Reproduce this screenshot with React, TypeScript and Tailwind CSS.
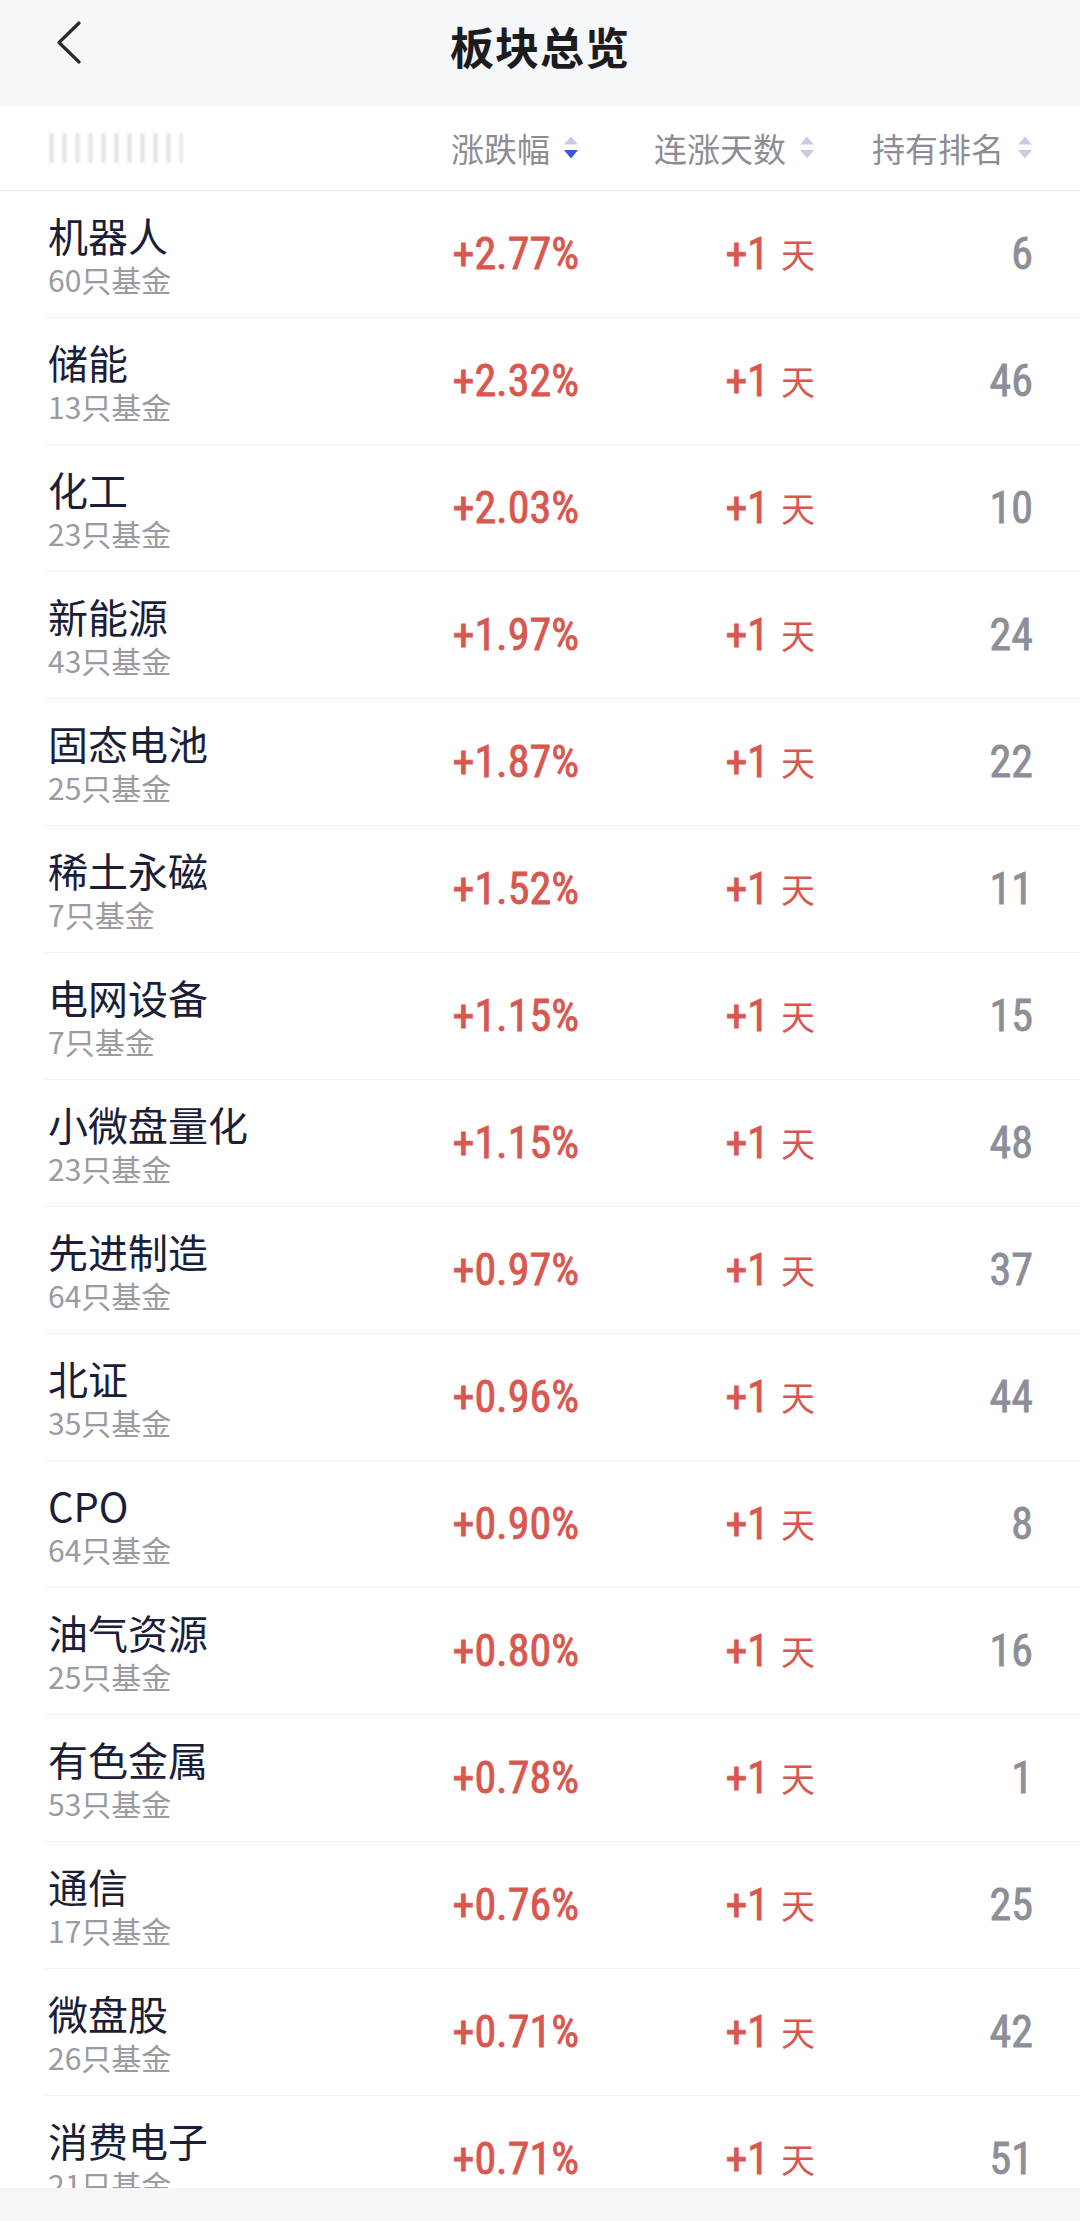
import React from "react";

type Row = { name: string; count: number; pct: string; rank: number };

const rows: Row[] = [
  { name: "机器人", count: 60, pct: "+2.77%", rank: 6 },
  { name: "储能", count: 13, pct: "+2.32%", rank: 46 },
  { name: "化工", count: 23, pct: "+2.03%", rank: 10 },
  { name: "新能源", count: 43, pct: "+1.97%", rank: 24 },
  { name: "固态电池", count: 25, pct: "+1.87%", rank: 22 },
  { name: "稀土永磁", count: 7, pct: "+1.52%", rank: 11 },
  { name: "电网设备", count: 7, pct: "+1.15%", rank: 15 },
  { name: "小微盘量化", count: 23, pct: "+1.15%", rank: 48 },
  { name: "先进制造", count: 64, pct: "+0.97%", rank: 37 },
  { name: "北证", count: 35, pct: "+0.96%", rank: 44 },
  { name: "CPO", count: 64, pct: "+0.90%", rank: 8 },
  { name: "油气资源", count: 25, pct: "+0.80%", rank: 16 },
  { name: "有色金属", count: 53, pct: "+0.78%", rank: 1 },
  { name: "通信", count: 17, pct: "+0.76%", rank: 25 },
  { name: "微盘股", count: 26, pct: "+0.71%", rank: 42 },
  { name: "消费电子", count: 21, pct: "+0.71%", rank: 51 },
];

function SortIcon({ active }: { active?: boolean }) {
  return (
    <svg width="18" height="26" viewBox="0 0 18 26" className="ml-[12px] shrink-0">
      <path d="M9 1.5 L16 9.5 L2 9.5 Z" fill="#c8cbe2" strokeLinejoin="round" />
      <path d="M2 15 L16 15 L9 23.5 Z" fill={active ? "#3a58d6" : "#c8cbe2"} strokeLinejoin="round" />
    </svg>
  );
}

export default function App() {
  return (
    <div className="w-[1080px] h-[2221px] flex flex-col overflow-hidden bg-white font-['Noto_Sans_CJK_SC','Noto_Sans',sans-serif]">
      {/* Top bar */}
      <div className="h-[106px] shrink-0 bg-[#f6f7fb] relative flex justify-center pt-[20px]">
        <svg
          width="28"
          height="44"
          viewBox="0 0 28 44"
          className="absolute left-[54px] top-[21px]"
        >
          <polyline
            points="25,2 5,21.5 25,41"
            fill="none"
            stroke="#2a2a2a"
            strokeWidth="3.2"
            strokeLinecap="round"
            strokeLinejoin="round"
          />
        </svg>
        <div className="text-[44px] leading-[52px] font-semibold text-[#1c1c1e] tracking-[1px]">
          板块总览
        </div>
      </div>

      {/* Column header */}
      <div className="h-[85px] shrink-0 flex items-center pl-[50px] pr-[46px] border-b border-[#ececf0]">
        <div className="flex-1 flex items-center">
          <div className="w-[132px] h-[30px] blur-[1.5px] bg-[repeating-linear-gradient(90deg,#cfcfd4_0px,#cfcfd4_3px,transparent_3px,transparent_13px)] opacity-80" />
        </div>
        <div className="w-[240px] flex items-center justify-end text-[33px] leading-[40px] text-[#8d8d92]">
          涨跌幅
          <SortIcon active />
        </div>
        <div className="w-[236px] flex items-center justify-end text-[33px] leading-[40px] text-[#8d8d92]">
          连涨天数
          <SortIcon />
        </div>
        <div className="w-[218px] flex items-center justify-end text-[33px] leading-[40px] text-[#8d8d92]">
          持有排名
          <SortIcon />
        </div>
      </div>

      {/* List */}
      <div className="flex-1 overflow-hidden">
        {rows.map((r, i) => (
          <div
            key={i}
            className="h-[127px] ml-[45px] border-b border-[#f1f1f4] flex items-center pl-[3px] pr-[47px]"
          >
            <div className="flex-1 flex flex-col">
              <div className="text-[40px] leading-[46px] text-[#1b1e38]">{r.name}</div>
              <div className="mt-[4px] text-[30px] leading-[34px] text-[#9a9aa1]">{r.count}只基金</div>
            </div>
            <div className="w-[240px] flex justify-end text-[44px] leading-[44px] font-normal text-[#d8574f] [-webkit-text-stroke:0.8px_#d8574f] font-['Liberation_Sans_Narrow','Roboto_Condensed',Roboto,sans-serif]">
              {r.pct}
            </div>
            <div className="w-[236px] flex justify-end items-center text-[#d8574f]">
              <span className="text-[44px] leading-[44px] font-normal [-webkit-text-stroke:0.8px_#d8574f] font-['Liberation_Sans_Narrow','Roboto_Condensed',Roboto,sans-serif]">
                +1
              </span>
              <span className="ml-[12px] text-[34px] leading-[44px]">天</span>
            </div>
            <div className="w-[218px] flex justify-end text-[44px] leading-[44px] font-normal text-[#8c8e98] [-webkit-text-stroke:0.8px_#8c8e98] font-['Liberation_Sans_Narrow','Roboto_Condensed',Roboto,sans-serif]">
              {r.rank}
            </div>
          </div>
        ))}
      </div>

      {/* Bottom system bar */}
      <div className="h-[33px] shrink-0 bg-[#f5f5f6]" />
    </div>
  );
}
